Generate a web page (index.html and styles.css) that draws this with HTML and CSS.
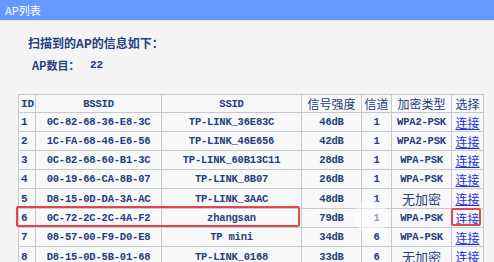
FILE: index.html
```html
<!doctype html>
<html lang="zh">
  <head>
    <meta charset="utf-8">
    <title>AP列表</title>
    <link rel="stylesheet" href="styles.css">
  </head>
  <body>
    <div class="titlebar">AP列表</div>
    <div class="content">
      <p class="lead">扫描到的AP的信息如下：</p>
      <p class="count"><span class="label">AP数目：</span><span class="num">22</span></p>
      <div class="wrap">
        <table class="aps">
          <colgroup>
            <col class="c-id"><col class="c-bssid"><col class="c-ssid"><col class="c-sig"><col class="c-ch"><col class="c-enc"><col class="c-sel">
          </colgroup>
          <tr class="head">
            <th class="mono">ID</th><th class="mono">BSSID</th><th class="mono">SSID</th><th>信号强度</th><th>信道</th><th>加密类型</th><th>选择</th>
          </tr>
          <tr><td>1</td><td class="mono">0C-82-68-36-E8-3C</td><td class="mono">TP-LINK_36E83C</td><td class="mono">46dB</td><td class="mono">1</td><td class="mono">WPA2-PSK</td><td><a href="#">连接</a></td></tr>
          <tr><td>2</td><td class="mono">1C-FA-68-46-E6-56</td><td class="mono">TP-LINK_46E656</td><td class="mono">42dB</td><td class="mono">1</td><td class="mono">WPA2-PSK</td><td><a href="#">连接</a></td></tr>
          <tr><td>3</td><td class="mono">0C-82-68-60-B1-3C</td><td class="mono">TP-LINK_60B13C11</td><td class="mono">28dB</td><td class="mono">1</td><td class="mono">WPA-PSK</td><td><a href="#">连接</a></td></tr>
          <tr><td>4</td><td class="mono">00-19-66-CA-8B-07</td><td class="mono">TP-LINK_8B07</td><td class="mono">26dB</td><td class="mono">1</td><td class="mono">WPA-PSK</td><td><a href="#">连接</a></td></tr>
          <tr><td>5</td><td class="mono">D8-15-0D-DA-3A-AC</td><td class="mono">TP-LINK_3AAC</td><td class="mono">48dB</td><td class="mono">1</td><td class="cjk">无加密</td><td><a href="#">连接</a></td></tr>
          <tr><td>6</td><td class="mono">0C-72-2C-2C-4A-F2</td><td class="mono">zhangsan</td><td class="mono">79dB</td><td class="mono">1</td><td class="mono">WPA-PSK</td><td><a href="#">连接</a></td></tr>
          <tr><td>7</td><td class="mono">08-57-00-F9-D0-E8</td><td class="mono">TP mini</td><td class="mono">34dB</td><td class="mono">6</td><td class="mono">WPA-PSK</td><td><a href="#">连接</a></td></tr>
          <tr><td>8</td><td class="mono">D8-15-0D-5B-01-68</td><td class="mono">TP-LINK_0168</td><td class="mono">33dB</td><td class="mono">6</td><td class="cjk">无加密</td><td><a href="#">连接</a></td></tr>
        </table>
        <div class="wm-logo"></div>
        <div class="mark mark-row"></div>
        <div class="mark mark-link"></div>
      </div>
    </div>
  </body>
</html>
```
FILE: styles.css
```css
:root {
  --bg: #f4f4f4;
  --bar: #6699ff;
  --ink: #24407e;
  --line: #c3c8d2;
  --link: #1d2fe0;
  --mark: #e0474a;
}

html, body {
  margin: 0;
  background: var(--bg);
  font-family: "Noto Sans CJK SC", "Liberation Sans", sans-serif;
  color: var(--ink);
  overflow: hidden;
}

.titlebar {
  height: 20px;
  line-height: 20px;
  padding-left: 5px;
  background: var(--bar);
  border-bottom: 1px solid #dfe6f5;
  color: #fff;
  font-size: 11px;
}

.content {
  padding-top: 13px;
}

.lead {
  margin: 0 0 0 28px;
  height: 18px;
  line-height: 18px;
  font-size: 12px;
  font-weight: bold;
}

.count {
  margin: 4px 0 0 32px;
  height: 18px;
  line-height: 18px;
  font-size: 11px;
  font-weight: bold;
  display: flex;
}

.count .label {
  width: 58px;
}

.count .num {
  font-family: "Liberation Mono", monospace;
}

.wrap {
  position: relative;
  margin: 20px 0 0 18px;
  width: 466px;
}

.aps {
  border-collapse: collapse;
  table-layout: fixed;
  width: 465px;
  background: #f8f8f9;
  border: 1px solid var(--line);
}

.c-id { width: 17px; }
.c-bssid { width: 126px; }
.c-ssid { width: 140px; }
.c-sig { width: 60px; }
.c-ch { width: 30px; }
.c-enc { width: 60px; }
.c-sel { width: 32px; }

.aps th, .aps td {
  border: 1px solid var(--line);
  padding: 0;
  height: 18px;
  text-align: center;
  font-size: 12px;
  font-weight: normal;
  white-space: nowrap;
  overflow: hidden;
}

.aps .head th {
  height: 16px;
}

.aps td:first-child, .aps th:first-child {
  text-align: left;
  padding-left: 2px;
  font-family: "Liberation Mono", monospace;
  font-weight: bold;
  font-size: 11px;
}

.aps .mono {
  font-family: "Liberation Mono", monospace;
  font-weight: bold;
  font-size: 10.5px;
  letter-spacing: -0.2px;
}

.aps .cjk {
  font-size: 13px;
}

.aps a {
  color: var(--link);
  font-size: 12px;
}

.mark {
  position: absolute;
  border: 2px solid var(--mark);
  border-radius: 2px;
  box-sizing: border-box;
}

.mark-row {
  left: -2px;
  top: 112px;
  width: 284px;
  height: 21px;
}

.mark-link {
  left: 433px;
  top: 114px;
  width: 30px;
  height: 18px;
}

.wm-logo {
  position: absolute;
  left: 336px;
  top: 106px;
  width: 34px;
  height: 34px;
  border-radius: 50%;
  background: rgba(255, 255, 255, 0.5);
  pointer-events: none;
}
```
